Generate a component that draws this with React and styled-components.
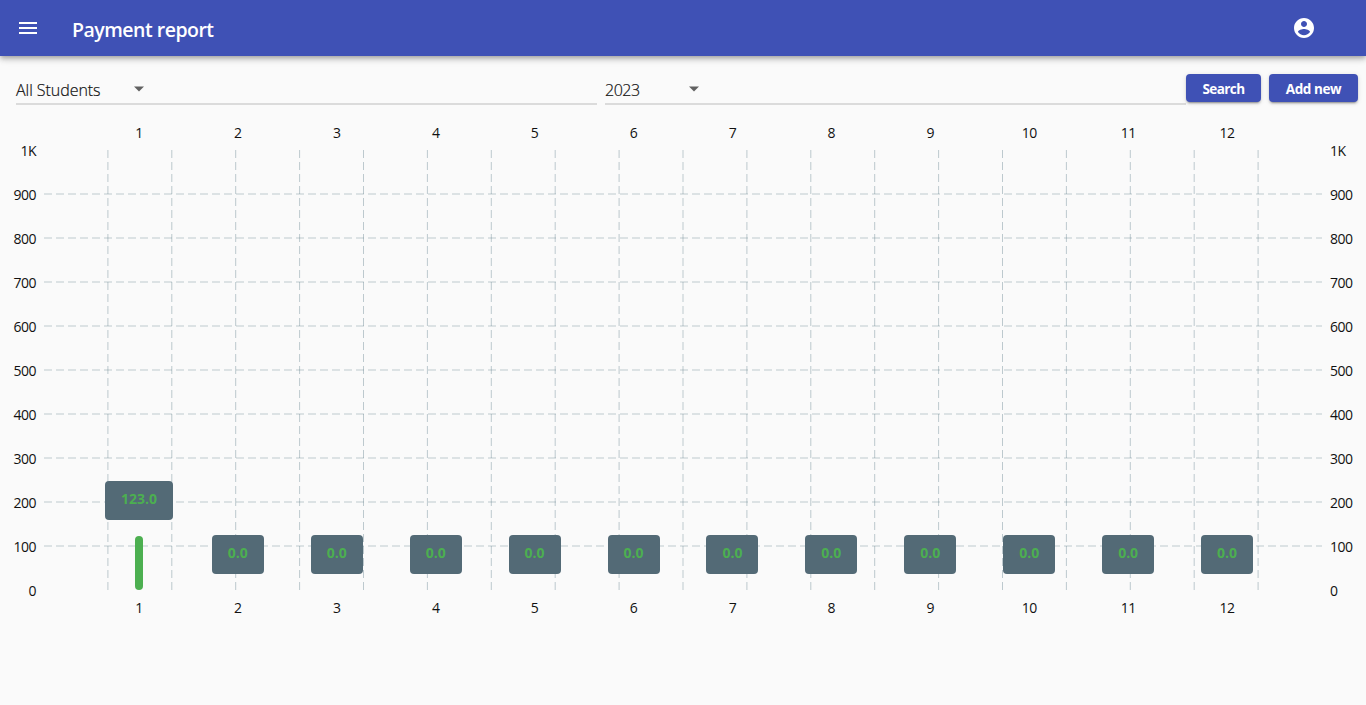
import React from 'react';
import styled, { createGlobalStyle } from 'styled-components';

const GlobalStyle = createGlobalStyle`
  * { box-sizing: border-box; }
  body {
    margin: 0;
    background: #fafafa;
    color: #111;
    font-family: "Open Sans", "Noto Sans", sans-serif;
    overflow: hidden;
  }
`;

const Page = styled.div`
  display: flex;
  flex-direction: column;
  height: 705px;
`;

const AppBar = styled.header`
  display: flex;
  align-items: center;
  height: 56px;
  padding: 0 50px 0 16px;
  background: #3f51b5;
  color: #fff;
  position: relative;
  box-shadow: 0 2px 4px -1px rgba(0, 0, 0, 0.2), 0 4px 5px rgba(0, 0, 0, 0.14),
    0 1px 10px rgba(0, 0, 0, 0.12);
`;

const Title = styled.h1`
  flex: 1;
  margin: 0 0 0 32px;
  padding-top: 4px;
  font-size: 19.5px;
  line-height: 28px;
  font-weight: 600;
  letter-spacing: -0.5px;
`;

const Icon = styled.svg`
  display: block;
  width: 24px;
  height: 24px;
  flex: none;
  fill: ${(p) => p.$color || '#fff'};
`;

const Filters = styled.div`
  display: flex;
  align-items: flex-start;
  height: 66px;
  padding: 18px 8px 0 16px;
`;

const Select = styled.div`
  flex: 1;
  display: flex;
  align-items: center;
  height: 31px;
  border-bottom: 2px solid #dbdbdb;
  margin-right: ${(p) => p.$gap}px;
`;

const SelectLabel = styled.span`
  width: ${(p) => p.$width}px;
  padding-top: 2px;
  font-size: 16px;
  font-weight: 300;
  -webkit-text-stroke: 0.2px #111;
  line-height: 22px;
  letter-spacing: ${(p) => p.$spacing}px;
  white-space: nowrap;
`;

const Button = styled.button`
  width: ${(p) => p.$width}px;
  height: 28px;
  margin: 0 0 0 ${(p) => p.$gap || 0}px;
  padding: 2px 0 0;
  border: 0;
  border-radius: 4px;
  background: #3f51b5;
  color: #fff;
  font: 700 13.5px/20px "Open Sans", sans-serif;
  letter-spacing: ${(p) => p.$spacing}px;
  box-shadow: 0 3px 1px -2px rgba(0, 0, 0, 0.2), 0 2px 2px rgba(0, 0, 0, 0.14),
    0 1px 5px rgba(0, 0, 0, 0.12);
`;

const Chart = styled.main`
  display: grid;
  grid-template-columns: 44px 1278px 44px;
  grid-template-rows: 28px 440px 36px;
`;

const MonthAxis = styled.div`
  grid-column: 2;
  display: flex;
  justify-content: space-evenly;
  padding-top: ${(p) => p.$top}px;
`;

const Month = styled.span`
  display: flex;
  justify-content: center;
  width: 8px;
  font-size: 14px;
  line-height: 20px;
  letter-spacing: -0.5px;
`;

const ValueAxis = styled.div`
  grid-row: 2;
  grid-column: ${(p) => (p.$right ? 3 : 1)};
  display: flex;
  flex-direction: column;
  height: 484px;
  margin-top: -22px;
  padding: 0 8px;
  text-align: ${(p) => (p.$right ? 'left' : 'right')};
`;

const Value = styled.span`
  height: 44px;
  font-size: 14px;
  line-height: 46px;
  letter-spacing: -0.5px;
`;

const Plot = styled.div`
  grid-row: 2;
  grid-column: 2;
  display: grid;
`;

const Grid = styled.svg`
  grid-area: 1 / 1;
  display: block;
  stroke: #607d8b;
  stroke-width: 0.4;
  stroke-dasharray: 8 4;
`;

const Bars = styled.div`
  grid-area: 1 / 1;
  display: flex;
  justify-content: space-evenly;
  align-items: flex-end;
`;

const BarGroup = styled.div`
  display: flex;
  flex-direction: column;
  align-items: center;
  width: 8px;
`;

const Tooltip = styled.div`
  z-index: 1;
  height: 39px;
  width: ${(p) => (p.$wide ? 68 : 52)}px;
  margin-bottom: 16px;
  border-radius: 4px;
  background: #536a76;
  color: #4caf50;
  font-size: 14px;
  font-weight: 700;
  line-height: 35px;
  text-align: center;
`;

const Bar = styled.div`
  width: 8px;
  height: ${(p) => p.$value * 0.44}px;
  border-radius: 4px;
  background: #4caf50;
`;

const months = [123, 0, 0, 0, 0, 0, 0, 0, 0, 0, 0, 0];
const values = ['1K', 900, 800, 700, 600, 500, 400, 300, 200, 100, 0];

function Months({ top }) {
  return (
    <MonthAxis $top={top}>
      {months.map((_, i) => (
        <Month key={i}>{i + 1}</Month>
      ))}
    </MonthAxis>
  );
}

function Values({ right }) {
  return (
    <ValueAxis $right={right}>
      {values.map((v) => (
        <Value key={v}>{v}</Value>
      ))}
    </ValueAxis>
  );
}

function Arrow() {
  return (
    <Icon $color="#616161" viewBox="0 0 24 24">
      <path d="M7 9.5l5 5 5-5z" />
    </Icon>
  );
}

export default function App() {
  return (
    <Page>
      <GlobalStyle />
      <AppBar>
        <Icon viewBox="0 0 24 24">
          <path d="M3 18h18v-2H3v2zm0-5h18v-2H3v2zm0-7v2h18V6H3z" />
        </Icon>
        <Title>Payment report</Title>
        <Icon viewBox="0 0 24 24">
          <path d="M12 2C6.48 2 2 6.48 2 12s4.48 10 10 10 10-4.48 10-10S17.52 2 12 2zm0 3c1.66 0 3 1.34 3 3s-1.34 3-3 3-3-1.34-3-3 1.34-3 3-3zm0 14.2c-2.5 0-4.71-1.28-6-3.22.03-1.99 4-3.08 6-3.08 1.99 0 5.97 1.09 6 3.08-1.29 1.94-3.5 3.22-6 3.22z" />
        </Icon>
      </AppBar>
      <Filters>
        <Select $gap={8}>
          <SelectLabel $width={111} $spacing={-0.05}>All Students</SelectLabel>
          <Arrow />
        </Select>
        <Select $gap={0}>
          <SelectLabel $width={77} $spacing={-0.5}>2023</SelectLabel>
          <Arrow />
        </Select>
        <Button $width={75} $spacing={-0.6}>Search</Button>
        <Button $width={89} $gap={8} $spacing={-0.4}>Add new</Button>
      </Filters>
      <Chart>
        <Months top={1} />
        <Values />
        <Plot>
          <Grid width="1278" height="440" viewBox="0 0 1278 440">
            {Array.from({ length: 19 }, (_, i) => (
              <line key={`v${i}`} x1={(i + 1) * 63.9} x2={(i + 1) * 63.9} y1="0" y2="440" />
            ))}
            {Array.from({ length: 9 }, (_, i) => (
              <line key={`h${i}`} x1="0" x2="1278" y1={(i + 1) * 44} y2={(i + 1) * 44} />
            ))}
          </Grid>
          <Bars>
            {months.map((m, i) => (
              <BarGroup key={i}>
                <Tooltip $wide={m > 0}>{m.toFixed(1)}</Tooltip>
                <Bar $value={m} />
              </BarGroup>
            ))}
          </Bars>
        </Plot>
        <Values right />
        <Months top={8} />
      </Chart>
    </Page>
  );
}
